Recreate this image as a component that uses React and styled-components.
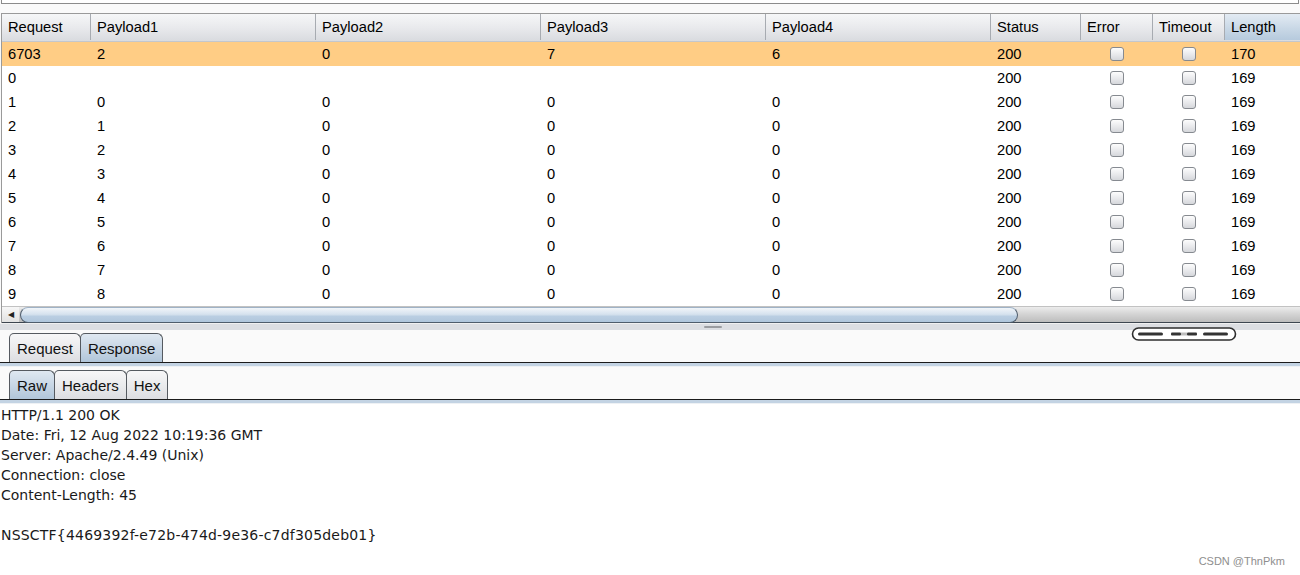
import React from "react";
import styled, { createGlobalStyle } from "styled-components";

const Global = createGlobalStyle`
  html, body { margin: 0; padding: 0; background: #fafafa; overflow: hidden; }
  #root { width: 1300px; height: 575px; }
`;

const Page = styled.div`
  position: relative;
  width: 1300px;
  height: 575px;
  display: flex;
  flex-direction: column;
  font-family: "Liberation Sans", Arial, sans-serif;
  font-size: 14.7px;
  color: #000;
  background: #fafafa;
`;

const TopField = styled.div`
  height: 3px;
  margin: 0 1px 0 1px;
  background: #fff;
  border: 1px solid #8c8c8c;
  border-top: none;
  flex: none;
`;

const TableFrame = styled.div`
  margin: 9px 0 0 1px;
  border-top: 1px solid #9a9a9a;
  border-left: 1px solid #9a9a9a;
  background: #fff;
  flex: none;
`;

const COLS = "89px 225px 225px 225px 225px 90px 72px 72px 1fr";

const HeaderRow = styled.div`
  display: grid;
  grid-template-columns: ${COLS};
  height: 26px;
  padding-bottom: 1px;
  border-bottom: 1px solid #c4c7cc;
  background: linear-gradient(#f6f7f8, #e8e9ec 55%, #dadce0);
`;

const HeaderCell = styled.div`
  display: flex;
  align-items: center;
  padding-left: 6px;
  border-right: 1px solid #a7abb1;
  background: ${(p) =>
    p.$sorted
      ? "linear-gradient(#e3ebf3, #c9d8e6 55%, #b6cadd)"
      : "linear-gradient(#f6f7f8, #e8e9ec 55%, #dadce0)"};
  &:last-child { border-right: none; }
`;

const Row = styled.div`
  display: grid;
  grid-template-columns: ${COLS};
  height: 24px;
  padding-bottom: 1px;
  box-sizing: border-box;
  background: ${(p) => (p.$selected ? "#ffcd85" : "#fff")};
`;

const Cell = styled.div`
  display: flex;
  align-items: center;
  justify-content: ${(p) => (p.$center ? "center" : "flex-start")};
  padding-left: ${(p) => (p.$center ? "0" : "6px")};
`;

const Check = styled.span`
  width: 12px;
  height: 12px;
  border: 1px solid #868a90;
  border-radius: 3px;
  background: linear-gradient(#fdfdfd, #e6e7ea 60%, #d5d7db);
  box-sizing: content-box;
`;

const ScrollBar = styled.div`
  display: flex;
  height: 15px;
  border-top: 1px solid #c2c2c2;
  border-bottom: 1px solid #3d4650;
  background: linear-gradient(#ececec, #d3d3d3 50%, #bdbdbd);
`;

const ArrowBtn = styled.div`
  width: 17px;
  display: flex;
  align-items: center;
  justify-content: center;
  background: linear-gradient(#f7f7f7, #e2e2e2);
  font-size: 8px;
  color: #222;
`;

const Thumb = styled.div`
  width: 998px;
  margin-left: 1px;
  border: 1px solid #4f5d6c;
  border-top: 1px solid #9fb2c6;
  border-radius: 10px;
  box-sizing: border-box;
  background: linear-gradient(#f1f5f9, #d6e2ee 45%, #bacee2 60%, #b0c6dc);
  margin-bottom: -1px;
`;

const Divider = styled.div`
  position: relative;
  height: 6px;
  border-top: 1px solid #f0f0f0;
  background: #dcdee2;
  flex: none;
`;

const DividerGrip = styled.span`
  position: absolute;
  left: 704px;
  top: 2px;
  width: 18px;
  height: 2px;
  border-radius: 1px;
  background: #9a9ca0;
`;

const TabBar = styled.div`
  position: relative;
  display: flex;
  align-items: flex-end;
  padding: 3px 0 0 9px;
  border-bottom: 1px solid #1b1b1b;
  flex: none;
`;

const Band = styled.div`
  height: 3px;
  background: #c3d3e3;
  border-bottom: 1px solid #eef1f4;
  flex: none;
`;

const Tab = styled.div`
  height: 28px;
  display: flex;
  align-items: center;
  padding: 0 7px;
  border: 1px solid #555a60;
  border-bottom: none;
  border-radius: 5px 6px 0 0;
  margin-right: -1px;
  font-size: 15px;
  background: ${(p) =>
    p.$active
      ? "linear-gradient(#dfe8f1, #c6d5e4 55%, #b1c6da)"
      : "linear-gradient(#f7f7f8, #e9eaec 55%, #dcdde1)"};
  color: #111;
`;

const Pill = styled.svg`
  position: absolute;
  left: 1131px;
  top: -4px;
`;

const Body = styled.div`
  flex: 1;
  background: #fff;
  padding: 1px 0 0 1px;
  font-family: "DejaVu Sans", Verdana, sans-serif;
  font-size: 14px;
  line-height: 20px;
  color: #1a1a1a;
`;

const Line = styled.div`
  height: 20px;
  white-space: pre;
  letter-spacing: ${(p) => (p.$wide ? "0.2px" : "0")};
`;

const Watermark = styled.div`
  position: absolute;
  right: 15px;
  bottom: 8px;
  font-family: "Liberation Sans", Arial, sans-serif;
  font-size: 11px;
  color: #8e8e8e;
`;

const headers = ["Request", "Payload1", "Payload2", "Payload3", "Payload4", "Status", "Error", "Timeout", "Length"];

const rows = [
  { r: "6703", p: ["2", "0", "7", "6"], s: "200", l: "170", sel: true },
  { r: "0", p: ["", "", "", ""], s: "200", l: "169" },
  ...Array.from({ length: 9 }, (_, i) => ({
    r: String(i + 1),
    p: [String(i), "0", "0", "0"],
    s: "200",
    l: "169",
  })),
];

const bodyLines = [
  "HTTP/1.1 200 OK",
  "Date: Fri, 12 Aug 2022 10:19:36 GMT",
  "Server: Apache/2.4.49 (Unix)",
  "Connection: close",
  "Content-Length: 45",
  "",
  "NSSCTF{4469392f-e72b-474d-9e36-c7df305deb01}",
];

export default function App() {
  return (
    <Page>
      <Global />
      <TopField />
      <TableFrame>
        <HeaderRow>
          {headers.map((h) => (
            <HeaderCell key={h} $sorted={h === "Length"}>{h}</HeaderCell>
          ))}
        </HeaderRow>
        {rows.map((row, i) => (
          <Row key={i} $selected={row.sel}>
            <Cell>{row.r}</Cell>
            {row.p.map((v, j) => (
              <Cell key={j}>{v}</Cell>
            ))}
            <Cell>{row.s}</Cell>
            <Cell $center><Check /></Cell>
            <Cell $center><Check /></Cell>
            <Cell>{row.l}</Cell>
          </Row>
        ))}
        <ScrollBar>
          <ArrowBtn>◀</ArrowBtn>
          <Thumb />
        </ScrollBar>
      </TableFrame>
      <Divider>
        <DividerGrip />
      </Divider>
      <TabBar>
        <Tab>Request</Tab>
        <Tab $active>Response</Tab>
        <Pill width="106" height="16" viewBox="0 0 106 16">
          <rect x="1.5" y="2" width="103" height="12" rx="6" fill="#fff" stroke="#2e2e2e" strokeWidth="1.6" />
          <rect x="7" y="6.5" width="25" height="3" rx="1.5" fill="#333" />
          <rect x="40" y="6.5" width="10" height="3" rx="1" fill="#333" />
          <rect x="50" y="6.5" width="6" height="3" fill="#bdbdbd" />
          <rect x="56" y="6.5" width="10" height="3" rx="1" fill="#333" />
          <rect x="72" y="6.5" width="25" height="3" rx="1.5" fill="#333" />
        </Pill>
      </TabBar>
      <Band />
      <TabBar>
        <Tab $active>Raw</Tab>
        <Tab>Headers</Tab>
        <Tab>Hex</Tab>
      </TabBar>
      <Band />
      <Body>
        {bodyLines.map((l, i) => (
          <Line key={i} $wide={i === 6}>{l}</Line>
        ))}
      </Body>
      <Watermark>CSDN @ThnPkm</Watermark>
    </Page>
  );
}
